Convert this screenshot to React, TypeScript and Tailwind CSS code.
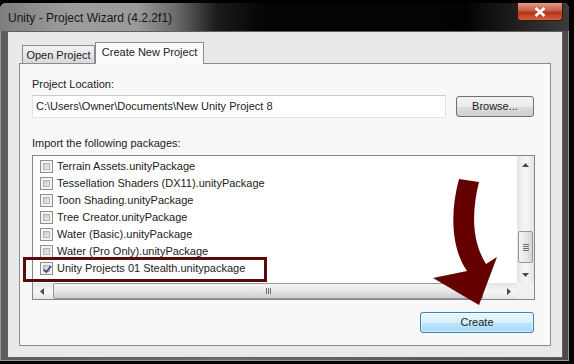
import React from "react";

const packages = [
  "Terrain Assets.unityPackage",
  "Tessellation Shaders (DX11).unityPackage",
  "Toon Shading.unityPackage",
  "Tree Creator.unityPackage",
  "Water (Basic).unityPackage",
  "Water (Pro Only).unityPackage",
];

const Checkbox = ({ checked }: { checked?: boolean }) => (
  <span className="flex h-[13px] w-[13px] shrink-0 border border-[#8e8f8f] bg-[#f4f4f4] p-[2px]">
    <span className="relative flex-1 border border-[#b4b4b4] bg-gradient-to-br from-[#c9c9c9] to-[#efefef]">
      {checked && (
        <svg className="absolute -left-[2px] -top-[2px]" width="11" height="11" viewBox="0 0 11 11">
          <path d="M2 5.5 L4.3 8 L9 2" fill="none" stroke="#3d4f8a" strokeWidth="1.8" />
        </svg>
      )}
    </span>
  </span>
);

const Tri = ({ dir }: { dir: "up" | "down" | "left" | "right" }) => {
  const d = {
    up: "M0 4 L3.5 0 L7 4 Z",
    down: "M0 0 L7 0 L3.5 4 Z",
    left: "M4 0 L4 7 L0 3.5 Z",
    right: "M0 0 L4 3.5 L0 7 Z",
  }[dir];
  const vertical = dir === "up" || dir === "down";
  return (
    <svg width={vertical ? 7 : 4} height={vertical ? 4 : 7} viewBox={vertical ? "0 0 7 4" : "0 0 4 7"}>
      <path d={d} fill="#4a4a4a" />
    </svg>
  );
};

export default function App() {
  return (
    <div className="relative h-[364px] w-[574px] overflow-hidden bg-black pt-[3px] font-['Liberation_Sans',Arial,sans-serif] text-[11px] text-[#222]">
      <div className="flex h-[358px] w-[569px] flex-col rounded-t-[6px] bg-[linear-gradient(90deg,#5c5c5c_0%,#6e6e6e_40%,#4a4a4a_100%)] shadow-[inset_0_0_0_1px_#9a9a9a]">
        {/* title bar */}
        <div className="flex h-[28px] items-start rounded-t-[6px] bg-[linear-gradient(90deg,#7e7e7e_0%,#9c9c9c_12%,#9a9a9a_24%,#6a6a6a_31%,#1c1c1c_38%,#050505_46%,#030303_82%,#3c3c3c_100%)] pl-[8px] pr-[6px]">
          <span className="mt-[6px] text-[12px] text-[#161616]">Unity - Project Wizard (4.2.2f1)</span>
          <div className="ml-auto flex h-[18px] w-[46px] items-center justify-center rounded-b-[4px] border border-t-0 border-[#3a1510] bg-[linear-gradient(180deg,#e39a88_0%,#c95d45_45%,#b8321b_55%,#d2603f_100%)]">
            <svg width="12" height="10" viewBox="0 0 12 10">
              <path d="M1.5 1 L10.5 9 M10.5 1 L1.5 9" stroke="#fff" strokeWidth="2.6" />
            </svg>
          </div>
        </div>

        {/* body */}
        <div className="flex flex-1 pb-[3px] pl-[7px] pr-[6px]">
          <div className="flex flex-1 flex-col border border-[#5f5f5f] bg-[#ebe9e7] px-[11px] pb-[11px] pt-[10px]">
            {/* tabs */}
            <div className="flex items-end pl-[3px]">
              <div className="flex h-[18px] w-[73px] items-center justify-center border border-b-0 border-[#898c95] bg-gradient-to-b from-[#f3f3f3] to-[#d9d9d9] pt-[1px]">
                Open Project
              </div>
              <div className="relative z-10 -mb-px flex h-[22px] w-[109px] items-center justify-center border border-b-0 border-[#898c95] bg-[#fbfbfb] pb-[2px]">
                Create New Project
              </div>
            </div>

            {/* panel */}
            <div className="flex flex-1 flex-col border border-[#898c95] bg-[#f8f8f8] pl-[12px] pr-[15px] pt-[13px]">
              <div className="h-[14px] leading-[14px]">Project Location:</div>
              <div className="mt-[4px] flex items-center gap-[10px]">
                <div className="flex h-[23px] w-[414px] items-center border border-[#e0e2e6] border-t-[#c9cbd0] bg-white pl-[3px]">
                  C:\Users\Owner\Documents\New Unity Project 8
                </div>
                <button className="flex h-[21px] w-[78px] items-center justify-center rounded-[3px] border border-[#707070] bg-[linear-gradient(180deg,#f2f2f2_0%,#ebebeb_50%,#dddddd_50%,#cfcfcf_100%)]">
                  Browse...
                </button>
              </div>

              <div className="mt-[18px] h-[14px] leading-[14px]">Import the following packages:</div>

              {/* package list */}
              <div className="mt-[5px] flex h-[145px] flex-col border border-[#828790] bg-white">
                <div className="flex flex-1">
                  <div className="flex flex-1 flex-col pt-[2px]">
                    {packages.map((p) => (
                      <div key={p} className="flex h-[17px] items-center gap-[4px] pl-[7px]">
                        <Checkbox />
                        <span>{p}</span>
                      </div>
                    ))}
                    <div className="flex h-[17px] items-center gap-[4px] pl-[7px]">
                      <Checkbox checked />
                      <span>Unity Projects 01 Stealth.unitypackage</span>
                    </div>
                  </div>
                  {/* vertical scrollbar */}
                  <div className="flex w-[17px] flex-col bg-[linear-gradient(90deg,#e4e4e4,#f4f4f4_40%,#f4f4f4_60%,#e4e4e4)]">
                    <div className="flex h-[17px] items-center justify-center">
                      <Tri dir="up" />
                    </div>
                    <div className="h-[58px]" />
                    <div className="mx-[1px] flex h-[32px] items-center justify-center rounded-[2px] border border-[#979797] bg-[linear-gradient(90deg,#f4f4f4,#e8e8e8_50%,#d4d4d4)]">
                      <div className="flex flex-col gap-[1px]">
                        <div className="h-px w-[6px] bg-[#6e6e6e]" />
                        <div className="h-px w-[6px] bg-[#6e6e6e]" />
                        <div className="h-px w-[6px] bg-[#6e6e6e]" />
                        <div className="h-px w-[6px] bg-[#6e6e6e]" />
                      </div>
                    </div>
                    <div className="flex-1" />
                    <div className="flex h-[17px] items-center justify-center">
                      <Tri dir="down" />
                    </div>
                  </div>
                </div>
                {/* horizontal scrollbar */}
                <div className="flex h-[16px] bg-[linear-gradient(180deg,#e4e4e4,#f4f4f4_40%,#f4f4f4_60%,#e4e4e4)]">
                  <div className="flex w-[17px] items-center justify-center">
                    <Tri dir="left" />
                  </div>
                  <div className="ml-[3px] flex w-[430px] items-center justify-center rounded-[2px] border border-[#979797] bg-[linear-gradient(180deg,#f6f6f6,#e6e6e6_50%,#cdcdcd)]">
                    <div className="flex gap-[1px]">
                      <div className="h-[6px] w-px bg-[#6e6e6e]" />
                      <div className="h-[6px] w-px bg-[#6e6e6e]" />
                      <div className="h-[6px] w-px bg-[#6e6e6e]" />
                    </div>
                  </div>
                  <div className="flex-1" />
                  <div className="flex w-[17px] items-center justify-center">
                    <Tri dir="right" />
                  </div>
                  <div className="w-[17px] bg-[#f0f0f0]" />
                </div>
              </div>

              <button className="mr-[1px] mt-[12px] flex h-[21px] w-[114px] items-center justify-center self-end rounded-[3px] border border-[#3c7fb1] bg-[linear-gradient(180deg,#eaf6fd_0%,#d9f0fc_50%,#bee6fd_50%,#a7d9f5_100%)] shadow-[inset_0_0_0_1px_rgba(255,255,255,0.5)]">
                Create
              </button>
            </div>
          </div>
        </div>
      </div>

      {/* highlight box over the checked row */}
      <div className="pointer-events-none absolute left-[23px] top-[257px] h-[25px] w-[244px] border-[3px] border-[#5a0a0a]" />

      {/* big arrow */}
      <svg className="pointer-events-none absolute left-0 top-0" width="574" height="364" viewBox="0 0 574 364">
        <path
          d="M459 179 L479 182 C472 210 471 240 486 264 L497 257 L479 305 L433 278 L467 271 C451 248 450 212 459 179 Z"
          fill="#640000"
        />
      </svg>
    </div>
  );
}
